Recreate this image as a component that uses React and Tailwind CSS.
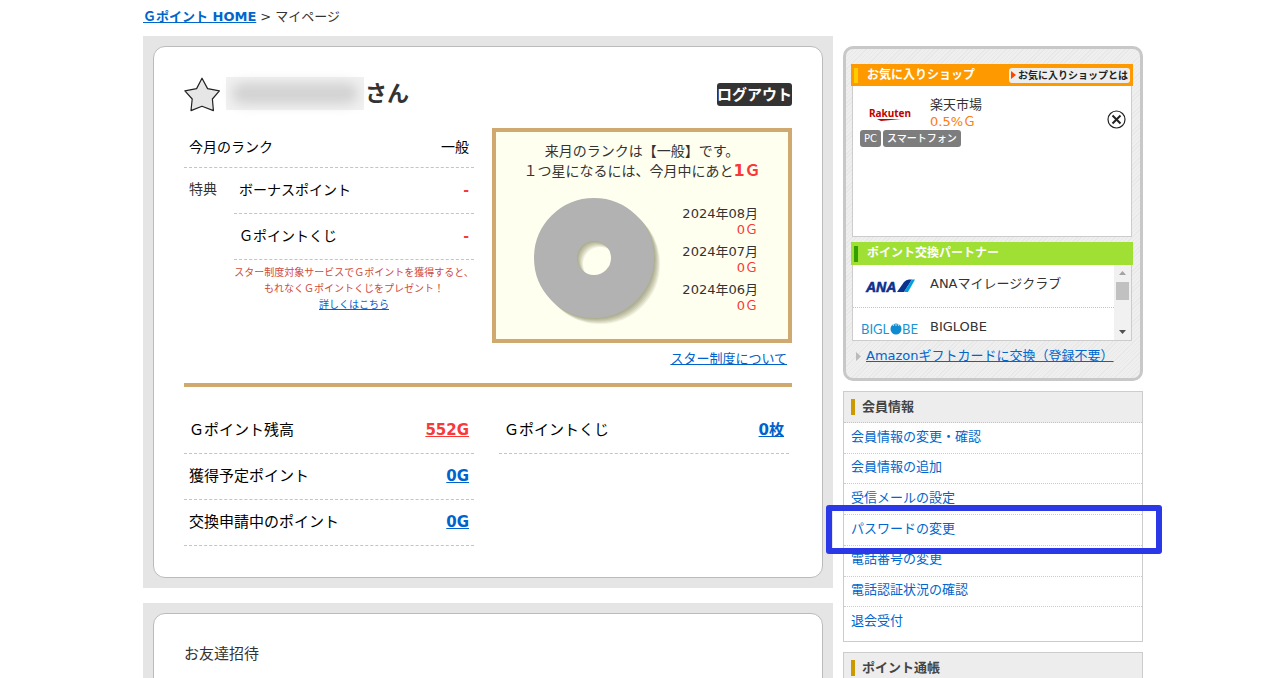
import React from 'react';

const months = [
    { label: '2024年08月', value: '0Ｇ' },
    { label: '2024年07月', value: '0Ｇ' },
    { label: '2024年06月', value: '0Ｇ' },
];

const balances = [
    { label: 'Ｇポイント残高', value: '552G', color: 'text-[#f93838]' },
    { label: '獲得予定ポイント', value: '0G', color: 'text-[#0062cc]' },
    { label: '交換申請中のポイント', value: '0G', color: 'text-[#0062cc]' },
];

const memberLinks = [
    { label: '会員情報の変更・確認' },
    { label: '会員情報の追加' },
    { label: '受信メールの設定' },
    { label: 'パスワードの変更', marked: true },
    { label: '電話番号の変更' },
    { label: '電話認証状況の確認' },
    { label: '退会受付' },
];

const Card = ({ children }) => (
    <section className="bg-[#e5e5e5] p-[10px]">
        <div className="rounded-xl border border-[#bbbbbb] bg-white px-[30px] pt-[30px] pb-[31px]">{children}</div>
    </section>
);

const StarIcon = () => (
    <svg width="37" height="36" viewBox="0 0 37 36" aria-hidden="true">
        <path
            d="M18 1.2 L23.6 11.6 L35.4 13.8 L28.4 22 L29.4 33.6 L18 29.2 L7 33.6 L8.2 22 L0.9 13.8 L12.6 11.6 Z"
            fill="#e6e6e6"
            stroke="#222222"
            strokeWidth="1.2"
            strokeLinejoin="round"
        />
    </svg>
);

// Empty donut: no points earned in any month yet
const DonutChart = () => (
    <svg width="130" height="130" viewBox="0 0 130 130" role="img" aria-label="ポイント獲得グラフ">
        <g fill="none" stroke="#303000" strokeOpacity="0.08" strokeWidth="43">
            <circle cx="61" cy="61" r="38.5" />
            <circle cx="62" cy="62" r="38.5" />
            <circle cx="63" cy="63" r="38.5" />
            <circle cx="64" cy="64" r="38.5" />
            <circle cx="65" cy="65" r="38.5" />
            <circle cx="66" cy="66" r="38.5" />
        </g>
        <circle cx="60" cy="60" r="38.5" fill="none" stroke="#b2b2b2" strokeWidth="43" />
    </svg>
);

const RakutenLogo = () => (
    <svg width="50" height="18" viewBox="0 0 50 18" aria-hidden="true">
        <text x="1" y="13" fontFamily="Noto Sans, sans-serif" fontSize="10" fontWeight="700" fill="#bf0000">
            Rakuten
        </text>
        <path d="M9 15 H33 L13 17 Z" fill="#bf0000" />
    </svg>
);

const AnaLogo = () => (
    <svg width="52" height="16" viewBox="0 0 52 16" aria-hidden="true">
        <text
            x="1"
            y="14"
            fontFamily="Liberation Sans, sans-serif"
            fontSize="14"
            fontWeight="700"
            fontStyle="italic"
            fill="#0b318f"
            stroke="#0b318f"
            strokeWidth="0.6"
        >
            ANA
        </text>
        <path d="M32 14 L39 4 Q41 1.5 44 1.5 H47 L39 14 Z" fill="#0b318f" />
        <path d="M39 14 L47 1.5 H50 L43 14 Z" fill="#00a0e0" />
    </svg>
);

const BiglobeLogo = () => (
    <svg width="58" height="16" viewBox="0 0 58 16" aria-hidden="true">
        <g fontFamily="Lato, sans-serif" fontSize="13" fill="#1a94d2">
            <text x="0" y="13">BIGL</text>
            <text x="41" y="13">BE</text>
        </g>
        <circle cx="35" cy="8" r="5.5" fill="#0f8bd0" />
        <path d="M32 5 L33 3 M35 5 V3 M38 5 L37 3" stroke="#ffffff" strokeWidth="0.8" />
    </svg>
);

const RankRow = ({ label, value }) => (
    <div className="flex h-[46px] items-center justify-between border-b border-dashed border-[#c4c4c4] px-[5px] text-[14px] text-black">
        <span>{label}</span>
        <span className="font-bold text-[#f93838]">{value}</span>
    </div>
);

const RankStatus = () => (
    <div className="flex-1">
        <div className="flex h-10 items-center justify-between border-b border-dashed border-[#c4c4c4] px-[5px] text-[14px] text-black">
            <span>今月のランク</span>
            <span>一般</span>
        </div>
        <div className="flex">
            <div className="flex h-[46px] w-[50px] items-center pb-1 pl-[5px] text-[14px]">特典</div>
            <div className="flex-1">
                <RankRow label="ボーナスポイント" value="-" />
                <RankRow label="Ｇポイントくじ" value="-" />
                <p className="pt-[5px] text-center text-[10px] leading-[16px] whitespace-nowrap text-[#cf4a3c]">
                    スター制度対象サービスでＧポイントを獲得すると、
                    <br />
                    もれなくＧポイントくじをプレゼント！
                    <br />
                    <a href="#star" className="text-[#0062cc] underline">詳しくはこちら</a>
                </p>
            </div>
        </div>
    </div>
);

const NextRank = () => (
    <div className="w-[300px]">
        <div className="h-[215px] border-4 border-[#cfa970] bg-[#fffff0] pt-[10px]">
            <p className="text-center text-[14px] leading-[19px]">
                来月のランクは【一般】です。
                <br />
                １つ星になるには、今月中にあと
                <strong className="text-[16px] text-[#f93838]">1Ｇ</strong>
            </p>
            <div className="flex justify-between pt-[17px] pr-[30px] pl-[38px]">
                <DonutChart />
                <ul className="flex flex-col gap-[6px] pt-2 text-right text-[13px] leading-[16px]">
                    {months.map((month) => (
                        <li key={month.label}>
                            {month.label}
                            <div className="text-[#f93838]">{month.value}</div>
                        </li>
                    ))}
                </ul>
            </div>
        </div>
        <div className="pt-[6px] pr-[5px] text-right text-[13px] leading-[20px]">
            <a href="#about-star" className="text-[#0062cc] underline">スター制度について</a>
        </div>
    </div>
);

const BalanceRow = ({ label, value, color }) => (
    <div className="flex h-[46px] items-center justify-between border-b border-dashed border-[#c4c4c4] px-[5px] text-[15px] text-black">
        <span>{label}</span>
        <a href="#balance" className={`font-bold underline ${color}`}>{value}</a>
    </div>
);

const Tag = ({ children }) => (
    <span className="rounded-[3px] bg-[#7d7d7d] px-1 text-[10px] leading-[17px] font-medium text-white">{children}</span>
);

const FavoriteShops = () => (
    <div>
        <div className="flex h-[22px] items-center justify-between bg-[#ff9900] px-[3px]">
            <h2 className="flex items-center gap-[9px] text-[12px] leading-[15px] font-bold text-white">
                <span className="h-[15px] w-1 bg-[#ffcc00]" />
                お気に入りショップ
            </h2>
            <a href="#favorite" className="flex h-[15px] items-center gap-[2px] rounded-[3px] bg-[#eeeeee] px-[2px] text-[10px] leading-[15px] font-bold text-[#222222]">
                <svg width="5" height="8" viewBox="0 0 5 8" aria-hidden="true">
                    <path d="M0 0 L5 4 L0 8 Z" fill="#ff4400" />
                </svg>
                お気に入りショップとは
            </a>
        </div>
        <div className="mx-px h-[151px] border border-t-0 border-[#cccccc] bg-white pt-[10px] pl-[7px]">
            <div className="flex items-center">
                <div className="w-[70px] pl-2">
                    <RakutenLogo />
                </div>
                <div className="flex-1 text-[13px] leading-[17px]">
                    楽天市場
                    <div className="text-[#ff7a0f]">0.5%Ｇ</div>
                </div>
                <button type="button" aria-label="削除" className="mt-3 mr-[5px]">
                    <svg width="19" height="19" viewBox="0 0 19 19">
                        <circle cx="9.5" cy="9.5" r="8.5" fill="#ffffff" stroke="#222222" strokeWidth="1.2" />
                        <path d="M5.5 5.5 L13.5 13.5 M13.5 5.5 L5.5 13.5" stroke="#222222" strokeWidth="2" />
                    </svg>
                </button>
            </div>
            <div className="flex gap-[2px]">
                <Tag>PC</Tag>
                <Tag>スマートフォン</Tag>
            </div>
        </div>
    </div>
);

const ExchangePartners = () => (
    <div className="mt-[5px]">
        <h2 className="flex h-[23px] items-center gap-[9px] bg-[#a0df34] pl-[3px] text-[12px] leading-[15px] font-bold text-white">
            <span className="h-4 w-1 bg-[#33a000]" />
            ポイント交換パートナー
        </h2>
        <div className="mx-px flex h-[76px] overflow-hidden border border-t-0 border-[#cccccc] bg-white">
            <ul className="flex-1 text-[13px]">
                <li className="flex h-[43px] items-start border-b border-dotted border-[#c4c4c4] pt-[10px] leading-[18px]">
                    <span className="w-[77px] pt-[3px] pl-3"><AnaLogo /></span>
                    ANAマイレージクラブ
                </li>
                <li className="flex h-[43px] items-start pt-[10px] leading-[18px]">
                    <span className="w-[77px] pt-[3px] pl-2"><BiglobeLogo /></span>
                    BIGLOBE
                </li>
            </ul>
            <div className="flex w-[17px] flex-col items-center bg-[#f1f1f1] py-[6px]">
                <svg width="7" height="4" viewBox="0 0 7 4" aria-hidden="true">
                    <path d="M0 4 L3.5 0 L7 4 Z" fill="#a3a3a3" />
                </svg>
                <div className="mt-[7px] h-[18px] w-[13px] bg-[#c1c1c1]" />
                <svg className="mt-auto" width="7" height="4" viewBox="0 0 7 4" aria-hidden="true">
                    <path d="M0 0 L3.5 4 L7 0 Z" fill="#505050" />
                </svg>
            </div>
        </div>
    </div>
);

const MenuHeader = ({ children }) => (
    <h2 className="flex h-[31px] items-center gap-[7px] border-b border-dotted border-[#c4c4c4] bg-[#ededed] pl-[7px] text-[13px] leading-[16px] font-bold text-[#444444]">
        <span className="h-4 w-1 bg-[#cc9900]" />
        {children}
    </h2>
);

const App = () => {
    return (
        <div className="h-screen overflow-hidden bg-white pl-[3px] font-['DejaVu_Sans','Noto_Sans_CJK_JP',sans-serif] text-[13px] text-[#333333]">
            <div className="mx-auto max-w-[1000px]">
                <nav className="flex h-9 items-center gap-1 pb-[3px]">
                    <a href="#home" className="font-bold text-[#0066cc] underline">Ｇポイント HOME</a>
                    <span>&gt;</span>
                    <span>マイページ</span>
                </nav>

                <div className="flex items-start gap-[10px]">
                    <main className="flex flex-1 flex-col gap-[15px]">
                        <Card>
                            <div className="flex h-[51px] items-start justify-between">
                                <div className="flex items-start">
                                    <StarIcon />
                                    <span className="mr-px ml-[5px] h-[33px] w-[138px] bg-[#f1f1f1] p-[6px]">
                                        <span className="block h-full rounded-full bg-[#d2d2d2] blur-[6px]" />
                                    </span>
                                    <span className="text-[22px] leading-[33px] font-bold">さん</span>
                                </div>
                                <button type="button" className="mt-[6px] h-[23px] rounded-[3px] bg-[#333333] text-[15px] leading-[20px] font-bold text-white">
                                    ログアウト
                                </button>
                            </div>

                            <div className="flex gap-[18px]">
                                <RankStatus />
                                <NextRank />
                            </div>

                            <hr className="mt-[14px] mb-[21px] border-t-4 border-[#cfa970]" />

                            <div className="flex gap-[25px] pr-[3px]">
                                <div className="flex-1">
                                    {balances.map((item) => (
                                        <BalanceRow key={item.label} {...item} />
                                    ))}
                                </div>
                                <div className="flex-1">
                                    <BalanceRow label="Ｇポイントくじ" value="0枚" color="text-[#0062cc]" />
                                </div>
                            </div>
                        </Card>
                        <Card>
                            <h2 className="h-[120px] text-[15px] leading-[20px]">お友達招待</h2>
                        </Card>
                    </main>

                    <aside className="mt-[10px] w-[300px]">
                        <div className="rounded-[10px] border-[3px] border-[#c8c8c8] bg-[repeating-linear-gradient(135deg,#efefef_0px,#efefef_2px,#e8e8e8_2px,#e8e8e8_3px)] pt-[15px] pr-[7px] pb-[12px] pl-[5px]">
                            <FavoriteShops />
                            <ExchangePartners />
                            <div className="flex items-center gap-[5px] pt-[5px] pl-[5px] leading-[20px] whitespace-nowrap">
                                <svg width="5" height="9" viewBox="0 0 5 9" aria-hidden="true">
                                    <path d="M0 0 L5 4.5 L0 9 Z" fill="#bbbbbb" />
                                </svg>
                                <a href="#amazon" className="text-[#0066cc] underline">Amazonギフトカードに交換（登録不要）</a>
                            </div>
                        </div>

                        <nav className="mt-[10px] border border-[#cccccc] pb-[3px]">
                            <MenuHeader>会員情報</MenuHeader>
                            <ul className="grid h-[215px] auto-rows-fr">
                                {memberLinks.map((link) => (
                                    <li key={link.label} className="relative flex items-center border-b border-dotted border-[#cccccc] pb-[3px] pl-[7px] last:border-b-0">
                                        <a href="#member" className="text-[#0066cc]">{link.label}</a>
                                        {link.marked && (
                                            <span className="absolute -top-[10px] -right-[20px] -bottom-[9px] -left-[18px] z-10 rounded-[3px] border-6 border-[#2b38e8]" />
                                        )}
                                    </li>
                                ))}
                            </ul>
                        </nav>

                        <nav className="mt-[10px] border border-[#cccccc]">
                            <MenuHeader>ポイント通帳</MenuHeader>
                        </nav>
                    </aside>
                </div>
            </div>
        </div>
    );
};

export default App;
